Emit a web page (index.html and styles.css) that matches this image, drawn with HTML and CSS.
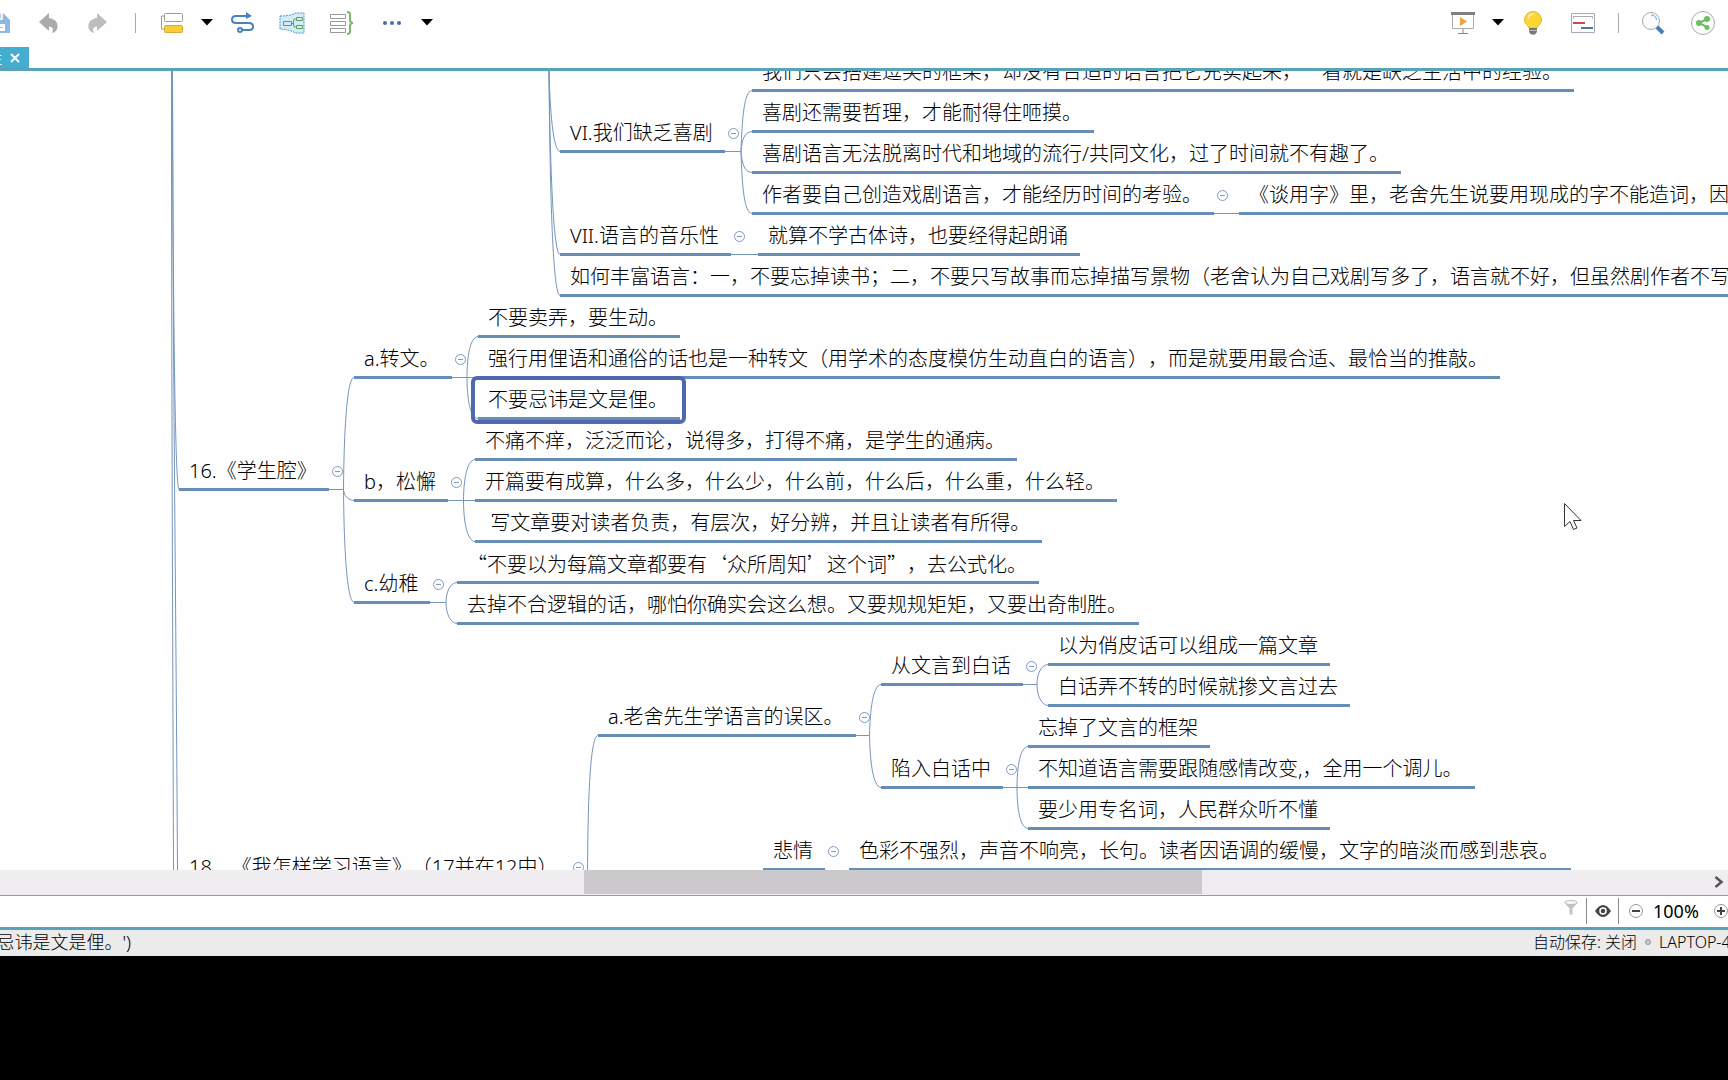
FILE: index.html
```html
<!DOCTYPE html>
<html lang="zh-CN">
<head>
<meta charset="utf-8">
<meta name="viewport" content="width=device-width, initial-scale=1">
<title>思维导图</title>
<link rel="stylesheet" href="styles.css">
</head>
<body>
<div class="app">
  <header class="toolbar">
    <div class="tools tools-left">
      <button class="tool tool-save" aria-label="保存"><svg width="24" height="24" viewBox="0 0 24 24"><path d="M2 2H17L24 9V22H2Z" fill="#8db9e6"/><path d="M12 2V9H17V2" fill="#eaf3fc"/><path d="M14 3V7" stroke="#8db9e6"/><path d="M7 13H19V20H7Z" fill="#fff"/><path d="M9 16.500H17" stroke="#9dc2e8"/></svg></button>
      <button class="tool" aria-label="撤销"><svg width="24" height="24" viewBox="0 0 24 24"><path d="M3 11L13 2V7C20 8 23 13 21 18Q20 21 16 22Q19 16 13 15.500V20Z" fill="#ababab"/></svg></button>
      <button class="tool" aria-label="重做"><svg width="24" height="24" viewBox="0 0 24 24"><path d="M21 11L11 2V7C4 8 1 13 3 18Q4 21 8 22Q5 16 11 15.500V20Z" fill="#bdbdbd"/></svg></button>
      <span class="sep"></span>
      <button class="tool" aria-label="主题"><svg width="24" height="24" viewBox="0 0 24 24"><path d="M4 5H1.500V18H4" fill="none" stroke="#999"/><rect x="4.500" y="2.500" width="18" height="8" rx="1" fill="#fff" stroke="#9a9a9a"/><rect x="4.500" y="14.500" width="18" height="7" rx="1" fill="#f7ce37" stroke="#d9a93c"/></svg></button>
      <button class="caret" aria-label="更多主题"><svg width="12" height="7" viewBox="0 0 12 7"><path d="M0 0H12L6 6.500Z"/></svg></button>
      <button class="tool" aria-label="联系"><svg width="24" height="24" viewBox="0 0 24 24" fill="none" stroke="#4784bd" stroke-width="2"><path d="M17 5H6Q2 5 2 8.500T6 12H19Q23 12 23 15.500T19 19H12"/><circle cx="10" cy="19" r="2"/><path d="M16 1L22 5L16 8Z" fill="#4784bd" stroke="none"/></svg></button>
      <button class="tool" aria-label="外框"><svg width="26" height="22" viewBox="0 0 26 22"><path d="M1 4Q13 4 16 1H25V21H16Q13 18 1 17Z" fill="#d3ecf8" stroke="#4d93c5" stroke-dasharray="2 1"/><path d="M4.500 9.500H12.500V13.500H4.500ZM17.500 5.500H23.500V8.500H17.500ZM17.500 13.500H23.500V16.500H17.500ZM12.500 11.500H14.500M17.500 7H16Q14.500 7 14.500 9V13Q14.500 15 16 15H17.500" fill="none" stroke="#5b9f62"/></svg></button>
      <button class="tool" aria-label="概要"><svg width="26" height="26" viewBox="0 0 26 26" fill="none"><path d="M1.500 4.500H16.500V8.500H1.500ZM1.500 11.500H16.500V15.500H1.500ZM1.500 18.500H16.500V22.500H1.500Z" stroke="#999"/><path d="M18 2Q21 2 21 4V10Q21 13 24 13Q21 13 21 16V22Q21 24 18 24" stroke="#7fb470" stroke-width="2"/></svg></button>
      <button class="tool" aria-label="更多"><svg width="20" height="6" viewBox="0 0 20 6" fill="#466da9"><circle cx="3" cy="3" r="2"/><circle cx="10" cy="3" r="2"/><circle cx="17" cy="3" r="2"/></svg></button>
      <button class="caret" aria-label="更多选项"><svg width="12" height="7" viewBox="0 0 12 7"><path d="M0 0H12L6 6.500Z"/></svg></button>
    </div>
    <div class="tools tools-right">
      <button class="tool" aria-label="演示"><svg width="26" height="24" viewBox="0 0 26 24"><path d="M2.500 3V17.500H23.500V3" fill="#fff" stroke="#aaa"/><path d="M1 1H25V4H1Z" fill="#808080"/><path d="M10 6L17 10.500L10 15Z" fill="#eba43b"/><path d="M13 18V22M8 22.500H18" stroke="#888" fill="none"/></svg></button>
      <button class="caret" aria-label="演示选项"><svg width="12" height="7" viewBox="0 0 12 7"><path d="M0 0H12L6 6.500Z"/></svg></button>
      <button class="tool" aria-label="头脑风暴"><svg width="20" height="24" viewBox="0 0 20 24"><path d="M10 .5A8.500 8.500 0 0 0 1.500 9C1.500 13 5 14 6 17H14C15 14 18.500 13 18.500 9A8.500 8.500 0 0 0 10 .5Z" fill="#fbd734" stroke="#e0b638"/><path d="M5 5Q8 1 12 3Q7 4 5 9Z" fill="#fff0a0"/><path d="M6 17H14V21L12 23.500H8L6 21Z" fill="#777"/><path d="M6 19.500H14" stroke="#bbb"/></svg></button>
      <button class="tool" aria-label="甘特图"><svg width="24" height="20" viewBox="0 0 24 20" fill="none"><path d="M.5 .5H23.500V19.500H.5Z" stroke="#a6a8b4"/><path d="M2.500 5.500V3.500H21.500V5.500" stroke="#aaa"/><path d="M2 10H14" stroke="#c9465b" stroke-width="2"/><path d="M10 15H22" stroke="#4679ad" stroke-width="2"/></svg></button>
      <span class="sep sep-narrow"></span>
      <button class="tool" aria-label="搜索"><svg width="24" height="24" viewBox="0 0 24 24" fill="none"><circle cx="10" cy="10" r="8.500" fill="#fafcff" stroke="#aaa"/><path d="M10 4Q15 4 15.500 9" stroke="#5fa5cf"/><path d="M16 16L22 22" stroke="#477fb3" stroke-width="4"/></svg></button>
      <button class="tool" aria-label="分享"><svg width="24" height="24" viewBox="0 0 24 24"><circle cx="12" cy="12" r="11.500" fill="#fcfcfc" stroke="#aaa"/><path d="M16 8L8 12L16 16" fill="none" stroke="#6ebd62" stroke-width="2"/><g fill="#6ebd62"><circle cx="16" cy="8" r="3"/><circle cx="8" cy="12" r="3"/><circle cx="16" cy="16.500" r="2.500"/></g></svg></button>
    </div>
  </header>

  <nav class="tabs">
    <div class="tab"><span>注</span><button class="tab-close" aria-label="关闭标签"><svg width="10" height="10" viewBox="0 0 10 10"><path d="M1 1L9 9M9 1L1 9" stroke="#fff" stroke-width="2"/></svg></button></div>
  </nav>

  <main class="canvas">
    <svg class="links" width="1728" height="799" viewBox="0 71 1728 799" fill="none" stroke="#7595bd">
      <!-- trunks coming from above -->
      <path d="M171.500 71C171.500 380 173 700 173.500 870M172.500 71C173 300 175 488 179 489.500M172.500 71C173 400 176 600 177.500 870"/>
      <path d="M549 71C550 110 553 151 560 151.500M549 71C550 160 553 254 560 254.500M549 71C550 200 553 295 560 295.500"/>
      <!-- VI -->
      <path d="M722 151.500H741M741 151.500C742 120 744 91 752 90.500M741 151.500C742 140 744 132 752 131.500M741 151.500C742 163 744 172 752 172.500M741 151.500C742 185 744 213 752 213.500M1210 213.500H1239M728 254.500H758"/>
      <!-- 16 -->
      <path d="M325 489.500H343.500M343.500 489.500C344 430 347 378 354 377.500M343.500 489.500C344 496 348 500 354 500.500M343.500 489.500C344 550 347 601 354 602.500"/>
      <path d="M448 377.500H478M467 377.500C467 357 470 337 478 336.500M467 377.500C467 398 470 418 478 418.500"/>
      <path d="M445 500.500H475M463.500 500.500C463.500 480 467 460 475 459.500M463.500 500.500C463.500 521 467 541 475 541.500"/>
      <path d="M427 602.500H446M446 602.500C446 592 450 583 457 582.500M446 602.500C446 613 450 623 457 623.500"/>
      <!-- 18 -->
      <path d="M587.500 870C588 800 590 736 598 735.500"/>
      <path d="M852 735.500H869.500M869.500 735.500C870 710 873 685 881 684.500M869.500 735.500C870 761 873 787 881 787.500"/>
      <path d="M1020 684.500H1037M1037 684.500C1037 674 1041 665 1048 664.500M1037 684.500C1037 695 1041 705 1048 705.500"/>
      <path d="M1000 787.500H1028M1017 787.500C1017 767 1020 747 1028 746.500M1017 787.500C1017 808 1020 828 1028 828.500"/>
    </svg>

    <div class="topic col-vi row-0">我们只会搭建逗笑的框架，却没有合适的语言把它充实起来，一看就是缺乏生活中的经验。</div>
    <div class="topic col-vi row-1">喜剧还需要哲理，才能耐得住咂摸。</div>
    <div class="topic col-vi row-2">喜剧语言无法脱离时代和地域的流行/共同文化，过了时间就不有趣了。</div>
    <div class="topic col-vi row-3">作者要自己创造戏剧语言，才能经历时间的考验。<button class="fold" aria-label="折叠"></button></div>
    <div class="topic col-word row-3">《谈用字》里，老舍先生说要用现成的字不能造词，因为</div>
    <div class="topic col-roman row-vi">VI.我们缺乏喜剧<button class="fold" aria-label="折叠"></button></div>
    <div class="topic col-roman row-4">VII.语言的音乐性<button class="fold" aria-label="折叠"></button></div>
    <div class="topic col-music row-4">就算不学古体诗，也要经得起朗诵</div>
    <div class="topic col-roman row-5">如何丰富语言：一，不要忘掉读书；二，不要只写故事而忘掉描写景物（老舍认为自己戏剧写多了，语言就不好，但虽然剧作者不写景</div>

    <div class="topic col-main row-16">16.《学生腔》<button class="fold" aria-label="折叠"></button></div>
    <div class="topic col-abc row-7">a.转文。<button class="fold" aria-label="折叠"></button></div>
    <div class="topic col-a row-6">不要卖弄，要生动。</div>
    <div class="topic col-a row-7">强行用俚语和通俗的话也是一种转文（用学术的态度模仿生动直白的语言），而是就要用最合适、最恰当的推敲。</div>
    <div class="topic col-a row-8 selected">不要忌讳是文是俚。</div>
    <div class="topic col-abc row-10">b，松懈<button class="fold" aria-label="折叠"></button></div>
    <div class="topic col-b row-9">不痛不痒，泛泛而论，说得多，打得不痛，是学生的通病。</div>
    <div class="topic col-b row-10">开篇要有成算，什么多，什么少，什么前，什么后，什么重，什么轻。</div>
    <div class="topic col-b row-11">&nbsp;写文章要对读者负责，有层次，好分辨，并且让读者有所得。</div>
    <div class="topic col-abc row-c">c.幼稚<button class="fold" aria-label="折叠"></button></div>
    <div class="topic col-c row-12 wide-quotes">“不要以为每篇文章都要有‘众所周知’这个词”，去公式化。</div>
    <div class="topic col-c row-13">去掉不合逻辑的话，哪怕你确实会这么想。又要规规矩矩，又要出奇制胜。</div>

    <div class="topic col-main row-18">18、《我怎样学习语言》（17并在12中）<button class="fold" aria-label="折叠"></button></div>
    <div class="topic col-error row-error">a.老舍先生学语言的误区。<button class="fold" aria-label="折叠"></button></div>
    <div class="topic col-talk row-talk">从文言到白话<button class="fold" aria-label="折叠"></button></div>
    <div class="topic col-talk-items row-14">以为俏皮话可以组成一篇文章</div>
    <div class="topic col-talk-items row-15">白话弄不转的时候就掺文言过去</div>
    <div class="topic col-talk row-17">陷入白话中<button class="fold" aria-label="折叠"></button></div>
    <div class="topic col-trap-items row-16th">忘掉了文言的框架</div>
    <div class="topic col-trap-items row-17">不知道语言需要跟随感情改变,，全用一个调儿。</div>
    <div class="topic col-trap-items row-18th">要少用专名词，人民群众听不懂</div>
    <div class="topic col-sad row-19">悲情<button class="fold" aria-label="折叠"></button></div>
    <div class="topic col-sad-items row-19">色彩不强烈，声音不响亮，长句。读者因语调的缓慢，文字的暗淡而感到悲哀。</div>

    <svg class="pointer" width="18" height="28" viewBox="0 0 18 28"><path d="M.5 .5V23.500L6 18.500L9.500 26.500L13 25L9.500 17.500H17Z" fill="#fff" stroke="#333"/></svg>
  </main>

  <div class="scrollbar">
    <div class="thumb"></div>
    <button class="scroll-right" aria-label="向右滚动"><svg width="10" height="12" viewBox="0 0 10 12"><path d="M1.500 1L7.500 6L1.500 11" fill="none" stroke="#555" stroke-width="2.500"/></svg></button>
  </div>

  <div class="viewbar">
    <button class="filter" aria-label="筛选"><svg width="14" height="15" viewBox="0 0 14 15"><path d="M0 2L5.500 8.500V14.500H8.500V8.500L14 2Z" fill="#c4c4c4"/><ellipse cx="7" cy="2.500" rx="6.500" ry="2" fill="#f6f6f6" stroke="#bbb"/></svg></button>
    <button class="eye" aria-label="显示"><svg width="16" height="12" viewBox="0 0 16 12"><path d="M0 6Q8-6 16 6Q8 18 0 6Z" fill="#444"/><circle cx="8" cy="6" r="3" fill="none" stroke="#fff" stroke-width="1.500"/></svg></button>
    <button class="zoom" aria-label="缩小"><svg width="14" height="14" viewBox="0 0 14 14" fill="none"><circle cx="7" cy="7" r="6.500" stroke="#999"/><path d="M3 7H11" stroke="#444" stroke-width="2"/></svg></button>
    <span class="zoom-value">100%</span>
    <button class="zoom" aria-label="放大"><svg width="14" height="14" viewBox="0 0 14 14" fill="none"><circle cx="7" cy="7" r="6.500" stroke="#999"/><path d="M3 7H11M7 3V11" stroke="#444" stroke-width="2"/></svg></button>
  </div>

  <footer class="status">
    <div class="status-topic">忌讳是文是俚。')</div>
    <div class="status-info"><span>自动保存: 关闭</span><i class="dot"></i><span>LAPTOP-4</span></div>
  </footer>
</div>
</body>
</html>
```
FILE: styles.css
```css
* { box-sizing: border-box; }

body {
  margin: 0;
  min-height: 100vh;
  padding-bottom: 124px;
  display: flex;
  overflow: hidden;
  background: #000;
  color: #000;
  font-family: "Noto Sans", "Noto Sans CJK SC", sans-serif;
  font-size: 20px;
  text-spacing-trim: space-all;
}

button {
  margin: 0;
  padding: 0;
  border: 0;
  background: none;
  display: flex;
  align-items: center;
  justify-content: center;
}

.app {
  flex: 1;
  min-width: 0;
  display: flex;
  flex-direction: column;
  background: #fefefe;
}

/* Toolbar */
.toolbar {
  height: 47px;
  padding-bottom: 2px;
  display: flex;
  justify-content: space-between;
}
.tools { display: flex; align-items: center; }
.tool { width: 50px; height: 44px; }
.tool-save { margin-left: -27px; }
.caret { width: 20px; height: 44px; }
.sep {
  width: 24px;
  height: 20px;
  background: linear-gradient(#aaa, #aaa) center / 1px 100% no-repeat;
}
.sep-narrow { width: 20px; }

/* Tabs */
.tabs { height: 24px; border-bottom: 3px solid #58a3b8; }
.tab {
  width: 29px;
  height: 21px;
  padding-right: 9px;
  display: flex;
  align-items: center;
  justify-content: flex-end;
  gap: 8px;
  overflow: hidden;
  background: #44add0;
  color: #fff;
  font-size: 14px;
}

/* Map canvas */
.canvas {
  position: relative;
  flex: 1;
  overflow: hidden;
}
.links { position: absolute; left: 0; top: 0; }

.topic {
  position: absolute;
  height: 41px;
  padding: 2px 12px 0 10px;
  border-bottom: 3px solid #668eb7;
  line-height: 38px;
  font-weight: 300;
  white-space: nowrap;
}
.wide-quotes { font-family: "Noto Sans CJK SC", sans-serif; }

.fold {
  position: absolute;
  left: 100%;
  top: 16px;
  width: 11px;
  height: 11px;
  margin-left: 3px;
  border: 1px solid #7d9bc4;
  border-radius: 50%;
  background: linear-gradient(#7d9bc4, #7d9bc4) center / 5px 1px no-repeat #fefefe;
}

.selected::after {
  content: "";
  position: absolute;
  inset: -3px -6px -7px -7px;
  border: 4px solid #4f68ae;
  border-radius: 6px;
}

.col-main { left: 179px; }
.col-abc { left: 354px; }
.col-a { left: 478px; }
.col-b { left: 475px; }
.col-c { left: 457px; }
.col-roman { left: 560px; }
.col-vi { left: 752px; }
.col-music { left: 758px; }
.col-word { left: 1239px; }
.col-error { left: 598px; }
.col-talk { left: 881px; }
.col-talk-items { left: 1048px; }
.col-trap-items { left: 1028px; }
.col-sad { left: 763px; }
.col-sad-items { left: 849px; }

.row-0 { top: -20px; }
.row-1 { top: 21px; }
.row-vi { top: 41px; }
.row-2 { top: 62px; }
.row-3 { top: 103px; }
.row-4 { top: 144px; }
.row-5 { top: 185px; }
.row-6 { top: 226px; }
.row-7 { top: 267px; }
.row-8 { top: 308px; }
.row-9 { top: 349px; }
.row-16 { top: 379px; }
.row-10 { top: 390px; }
.row-11 { top: 431px; }
.row-12 { top: 472px; }
.row-c { top: 492px; }
.row-13 { top: 513px; }
.row-14 { top: 554px; }
.row-talk { top: 574px; }
.row-15 { top: 595px; }
.row-error { top: 625px; }
.row-16th { top: 636px; }
.row-17 { top: 677px; }
.row-18th { top: 718px; }
.row-19 { top: 759px; }
.row-18 { top: 775px; }

.pointer { position: absolute; left: 1564px; top: 432px; }

/* Horizontal scrollbar */
.scrollbar {
  height: 26px;
  padding-right: 4px;
  display: flex;
  border-bottom: 1px solid #999;
  background: #efedf0;
}
.thumb {
  width: 35.8%;
  height: 24px;
  margin-left: 33.9%;
  background: #cbc9cc;
}
.scroll-right { width: 10px; height: 24px; margin-left: auto; }

/* View controls */
.viewbar {
  height: 34px;
  padding-bottom: 1px;
  display: flex;
  align-items: center;
  justify-content: flex-end;
  border-bottom: 3px solid #58a3b8;
  font-size: 18px;
}
.filter { width: 30px; height: 26px; padding-bottom: 8px; }
.eye {
  width: 33px;
  height: 26px;
  border: solid #888;
  border-width: 0 1px;
}
.zoom { width: 34px; height: 26px; }
.zoom:last-child { width: 15px; }
.zoom-value { width: 60px; }

/* Status bar */
.status {
  height: 26px;
  display: flex;
  align-items: center;
  justify-content: space-between;
  background: #ebebeb;
  line-height: 24px;
  padding-bottom: 2px;
  white-space: nowrap;
  font-weight: 300;
}
.status-topic {
  width: 131px;
  display: flex;
  justify-content: flex-end;
  overflow: hidden;
  font-size: 18px;
}
.status-info {
  width: 195px;
  display: flex;
  align-items: center;
  gap: 8px;
  overflow: hidden;
  font-size: 16px;
}
.status-info span { flex: none; }
.dot {
  flex: none;
  width: 6px;
  height: 6px;
  border: 1px solid #999;
  border-radius: 50%;
  background: #ccc;
}
```
